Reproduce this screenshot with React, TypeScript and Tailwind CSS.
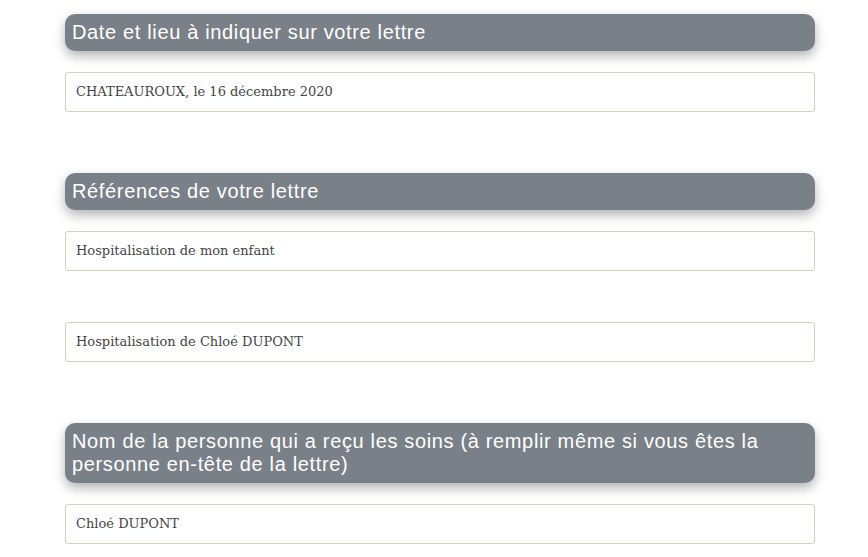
import React from "react";

function Header({ children }: { children: React.ReactNode }) {
  return (
    <div className="rounded-[10px] bg-[#7a8088] px-[7px] py-[7px] text-[20px] leading-[23px] tracking-[0.65px] text-white shadow-[0_5px_12px_rgba(0,0,0,0.3)] [font-family:'Liberation_Sans',Arial,sans-serif]">
      {children}
    </div>
  );
}

function Field({ value }: { value: string }) {
  return (
    <div className="flex h-[40px] items-center rounded-[3px] border border-[#d6cfbe] bg-white px-[10px] text-[13px] text-[#444] [font-family:'DejaVu_Serif',serif]">
      {value}
    </div>
  );
}

export default function App() {
  return (
    <div className="min-h-[557px] bg-white">
      <div className="ml-[65px] w-[750px] pt-[14px]">
        <Header>Date et lieu à indiquer sur votre lettre</Header>
        <div className="mt-[21px]">
          <Field value="CHATEAUROUX, le 16 décembre 2020" />
        </div>
        <div className="mt-[61px]">
          <Header>Références de votre lettre</Header>
        </div>
        <div className="mt-[21px]">
          <Field value="Hospitalisation de mon enfant" />
        </div>
        <div className="mt-[51px]">
          <Field value="Hospitalisation de Chloé DUPONT" />
        </div>
        <div className="mt-[61px]">
          <Header>
            Nom de la personne qui a reçu les soins (à remplir même si vous êtes la personne en-tête de la lettre)
          </Header>
        </div>
        <div className="mt-[21px]">
          <Field value="Chloé DUPONT" />
        </div>
      </div>
    </div>
  );
}
